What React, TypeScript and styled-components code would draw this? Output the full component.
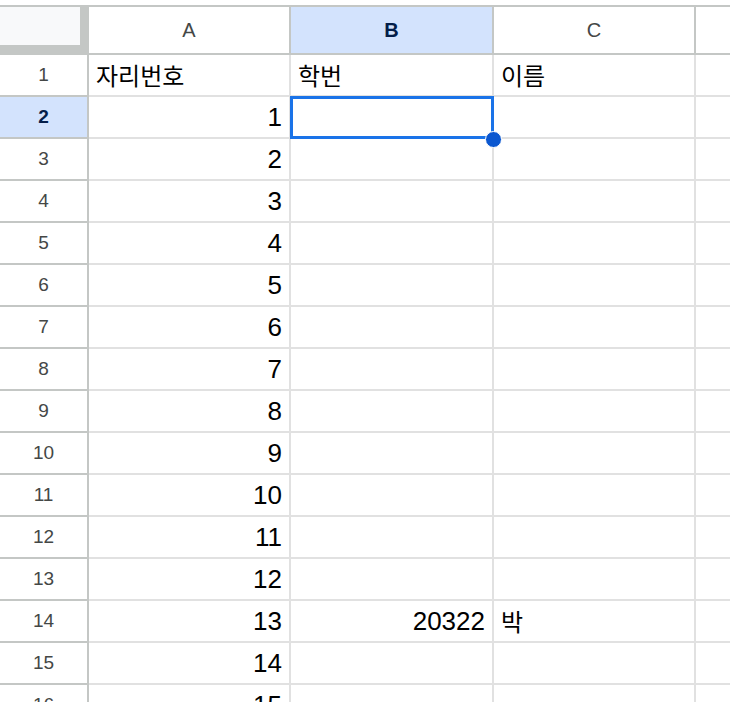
import React from "react";
import styled, { createGlobalStyle } from "styled-components";

const Global = createGlobalStyle`
  html, body {
    margin: 0;
    padding: 0;
    background: #ffffff;
    overflow: hidden;
    height: 702px;
  }
  body {
    font-family: "Liberation Sans", Arial, "Noto Sans CJK KR", sans-serif;
  }
`;

const HEADER_LINE = "#c4c7c5";
const GRID_LINE = "#e1e1e1";
const COLS = "89px 202px 203px 202px 1fr";

const Sheet = styled.div`
  padding-top: 5px;
  width: 730px;
  height: 697px;
  overflow: hidden;
`;

const HeaderRow = styled.div`
  display: grid;
  grid-template-columns: ${COLS};
  height: 50px;
  box-sizing: border-box;
  border-top: 2px solid ${HEADER_LINE};
`;

const Corner = styled.div`
  box-sizing: border-box;
  background: #f8f9fa;
  border-right: 9px solid ${HEADER_LINE};
  border-bottom: 10px solid ${HEADER_LINE};
`;

const ColHeader = styled.div<{ $selected?: boolean; $last?: boolean }>`
  box-sizing: border-box;
  display: flex;
  align-items: center;
  justify-content: center;
  border-right: ${(p) => (p.$last ? "none" : `2px solid ${HEADER_LINE}`)};
  border-bottom: 2px solid ${HEADER_LINE};
  background: ${(p) => (p.$selected ? "#d3e3fd" : "#ffffff")};
  color: ${(p) => (p.$selected ? "#041e49" : "#444746")};
  font-weight: ${(p) => (p.$selected ? 700 : 400)};
  font-size: 20px;
`;

const Row = styled.div`
  display: grid;
  grid-template-columns: ${COLS};
  height: 42px;
`;

const RowHeader = styled.div<{ $selected?: boolean }>`
  box-sizing: border-box;
  display: flex;
  align-items: center;
  justify-content: center;
  border-right: 2px solid ${HEADER_LINE};
  border-bottom: 2px solid ${HEADER_LINE};
  background: ${(p) => (p.$selected ? "#d3e3fd" : "#ffffff")};
  color: ${(p) => (p.$selected ? "#041e49" : "#444746")};
  font-weight: ${(p) => (p.$selected ? 700 : 400)};
  font-size: 19px;
`;

const Cell = styled.div<{
  $align?: "left" | "right";
  $korean?: boolean;
  $active?: boolean;
  $last?: boolean;
}>`
  box-sizing: border-box;
  position: ${(p) => (p.$active ? "relative" : "static")};
  z-index: ${(p) => (p.$active ? 2 : "auto")};
  border-right: ${(p) => (p.$last ? "none" : `2px solid ${GRID_LINE}`)};
  border-bottom: 2px solid ${GRID_LINE};
  padding: 0 7px 0 7px;
  text-align: ${(p) => p.$align ?? "left"};
  font-size: ${(p) => (p.$korean ? "24px" : "26px")};
  font-family: ${(p) =>
    p.$korean
      ? `"Noto Sans CJK KR", "Liberation Sans", sans-serif`
      : `"Liberation Sans", Arial, "Noto Sans CJK KR", sans-serif`};
  line-height: 40px;
  color: #000000;
  white-space: nowrap;
  overflow: visible;
`;

const Selection = styled.div`
  position: absolute;
  left: -1px;
  top: -1px;
  right: -2px;
  bottom: -2px;
  border: 3px solid #1a73e8;
  pointer-events: none;
`;

const FillHandle = styled.div`
  position: absolute;
  right: -10px;
  bottom: -11px;
  width: 15px;
  height: 15px;
  border-radius: 50%;
  background: #0b57d0;
  border: 1.5px solid #ffffff;
`;

type CellData = { text?: string; align?: "left" | "right"; korean?: boolean };

const rows: CellData[][] = [];
rows.push([
  { text: "자리번호", korean: true },
  { text: "학번", korean: true },
  { text: "이름", korean: true },
]);
for (let i = 1; i <= 15; i++) {
  const r: CellData[] = [{ text: String(i), align: "right" }, {}, {}];
  if (i === 13) {
    r[1] = { text: "20322", align: "right" };
    r[2] = { text: "박", korean: true };
  }
  rows.push(r);
}

export default function App() {
  return (
    <>
      <Global />
      <Sheet>
        <HeaderRow>
          <Corner />
          <ColHeader>A</ColHeader>
          <ColHeader $selected>B</ColHeader>
          <ColHeader>C</ColHeader>
          <ColHeader $last />
        </HeaderRow>
        {rows.map((cells, idx) => {
          const rowNum = idx + 1;
          return (
            <Row key={rowNum}>
              <RowHeader $selected={rowNum === 2}>{rowNum}</RowHeader>
              {cells.map((c, ci) => {
                const active = rowNum === 2 && ci === 1;
                return (
                  <Cell key={ci} $align={c.align} $korean={c.korean} $active={active}>
                    {c.text}
                    {active && (
                      <>
                        <Selection />
                        <FillHandle />
                      </>
                    )}
                  </Cell>
                );
              })}
              <Cell $last />
            </Row>
          );
        })}
      </Sheet>
    </>
  );
}
